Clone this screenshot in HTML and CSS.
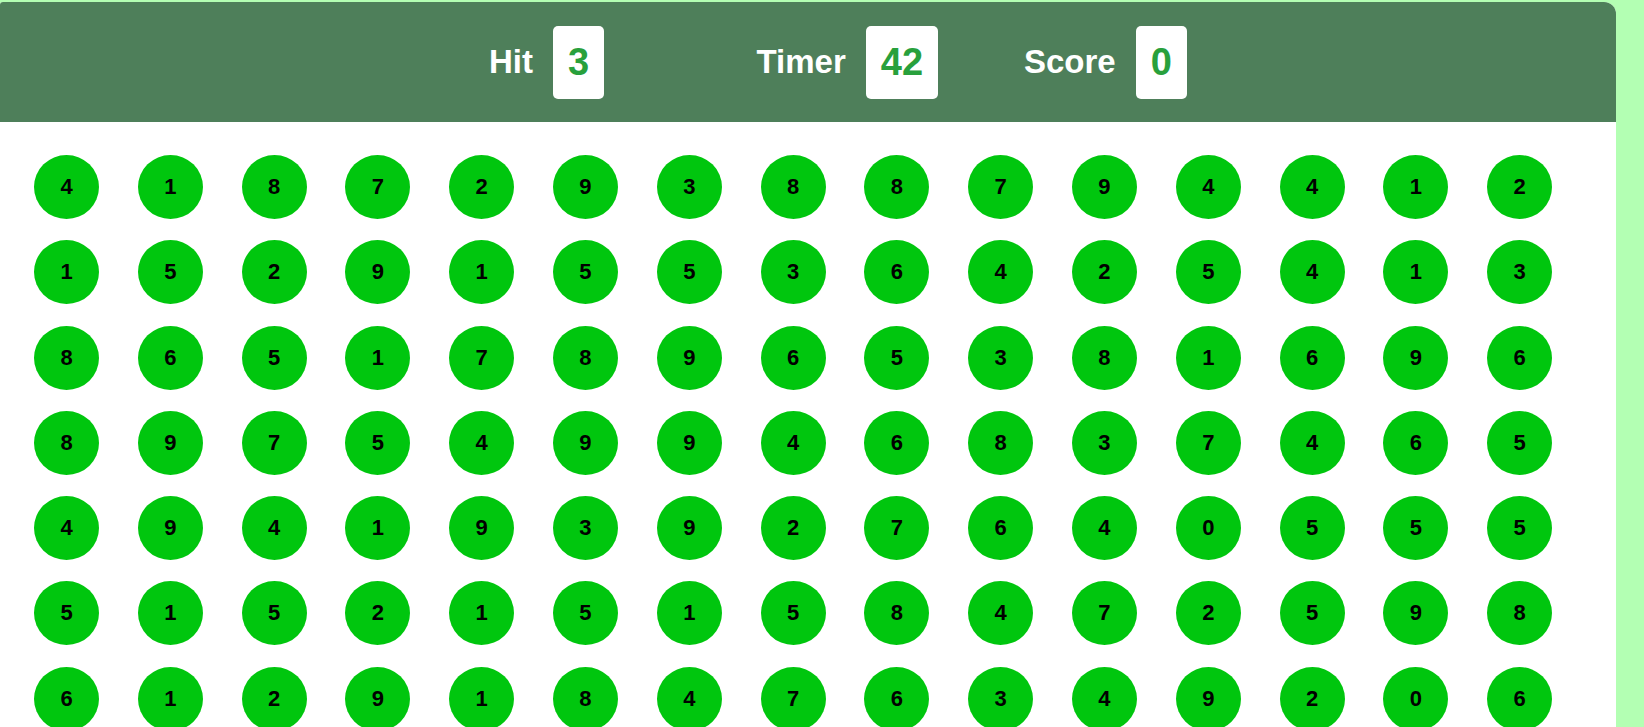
FILE: index.html
```html
<!DOCTYPE html>
<html>
<head>
<meta charset="utf-8">
<link rel="stylesheet" href="styles.css">
</head>
<body>
<main class="panel">
  <header class="ptop">
    <div class="elem"><span class="label">Hit</span><span class="box">3</span></div>
    <div class="elem"><span class="label">Timer</span><span class="box">42</span></div>
    <div class="elem"><span class="label">Score</span><span class="box">0</span></div>
  </header>
  <section class="pbtm">
    <div class="bubble">4</div><div class="bubble">1</div><div class="bubble">8</div><div class="bubble">7</div><div class="bubble">2</div><div class="bubble">9</div><div class="bubble">3</div><div class="bubble">8</div><div class="bubble">8</div><div class="bubble">7</div><div class="bubble">9</div><div class="bubble">4</div><div class="bubble">4</div><div class="bubble">1</div><div class="bubble">2</div>
    <div class="bubble">1</div><div class="bubble">5</div><div class="bubble">2</div><div class="bubble">9</div><div class="bubble">1</div><div class="bubble">5</div><div class="bubble">5</div><div class="bubble">3</div><div class="bubble">6</div><div class="bubble">4</div><div class="bubble">2</div><div class="bubble">5</div><div class="bubble">4</div><div class="bubble">1</div><div class="bubble">3</div>
    <div class="bubble">8</div><div class="bubble">6</div><div class="bubble">5</div><div class="bubble">1</div><div class="bubble">7</div><div class="bubble">8</div><div class="bubble">9</div><div class="bubble">6</div><div class="bubble">5</div><div class="bubble">3</div><div class="bubble">8</div><div class="bubble">1</div><div class="bubble">6</div><div class="bubble">9</div><div class="bubble">6</div>
    <div class="bubble">8</div><div class="bubble">9</div><div class="bubble">7</div><div class="bubble">5</div><div class="bubble">4</div><div class="bubble">9</div><div class="bubble">9</div><div class="bubble">4</div><div class="bubble">6</div><div class="bubble">8</div><div class="bubble">3</div><div class="bubble">7</div><div class="bubble">4</div><div class="bubble">6</div><div class="bubble">5</div>
    <div class="bubble">4</div><div class="bubble">9</div><div class="bubble">4</div><div class="bubble">1</div><div class="bubble">9</div><div class="bubble">3</div><div class="bubble">9</div><div class="bubble">2</div><div class="bubble">7</div><div class="bubble">6</div><div class="bubble">4</div><div class="bubble">0</div><div class="bubble">5</div><div class="bubble">5</div><div class="bubble">5</div>
    <div class="bubble">5</div><div class="bubble">1</div><div class="bubble">5</div><div class="bubble">2</div><div class="bubble">1</div><div class="bubble">5</div><div class="bubble">1</div><div class="bubble">5</div><div class="bubble">8</div><div class="bubble">4</div><div class="bubble">7</div><div class="bubble">2</div><div class="bubble">5</div><div class="bubble">9</div><div class="bubble">8</div>
    <div class="bubble">6</div><div class="bubble">1</div><div class="bubble">2</div><div class="bubble">9</div><div class="bubble">1</div><div class="bubble">8</div><div class="bubble">4</div><div class="bubble">7</div><div class="bubble">6</div><div class="bubble">3</div><div class="bubble">4</div><div class="bubble">9</div><div class="bubble">2</div><div class="bubble">0</div><div class="bubble">6</div>
  </section>
</main>
</body>
</html>
```

FILE: styles.css
```css
* { box-sizing: border-box; }
html, body { margin: 0; padding: 0; }
body {
  background: #b3ffb3;
  font-family: "Liberation Sans", Arial, sans-serif;
  padding-top: 2px;
  overflow: hidden;
  height: 727px;
}
.panel {
  width: 1616px;
  min-height: 760px;
  background: #ffffff;
  border-radius: 3px 12px 0 0;
  overflow: hidden;
}
.ptop {
  height: 120px;
  background: #4e7f5a;
  display: flex;
  align-items: center;
  padding-left: 489px;
}
.elem {
  width: 267.5px;
  display: flex;
  align-items: center;
  gap: 20px;
}
.label {
  color: #ffffff;
  font-size: 33px;
  font-weight: bold;
}
.box {
  background: #ffffff;
  color: #28a03c;
  font-size: 38px;
  font-weight: bold;
  padding: 15px;
  border-radius: 5px;
  line-height: 43px;
}
.pbtm {
  display: grid;
  grid-template-columns: repeat(15, 65px);
  column-gap: 38.8px;
  row-gap: 21.3px;
  padding: 33px 0 0 34px;
}
.bubble {
  width: 65px;
  height: 64px;
  border-radius: 50%;
  background: #00c60e;
  color: #000000;
  font-size: 22px;
  font-weight: bold;
  display: flex;
  align-items: center;
  justify-content: center;
}
```
